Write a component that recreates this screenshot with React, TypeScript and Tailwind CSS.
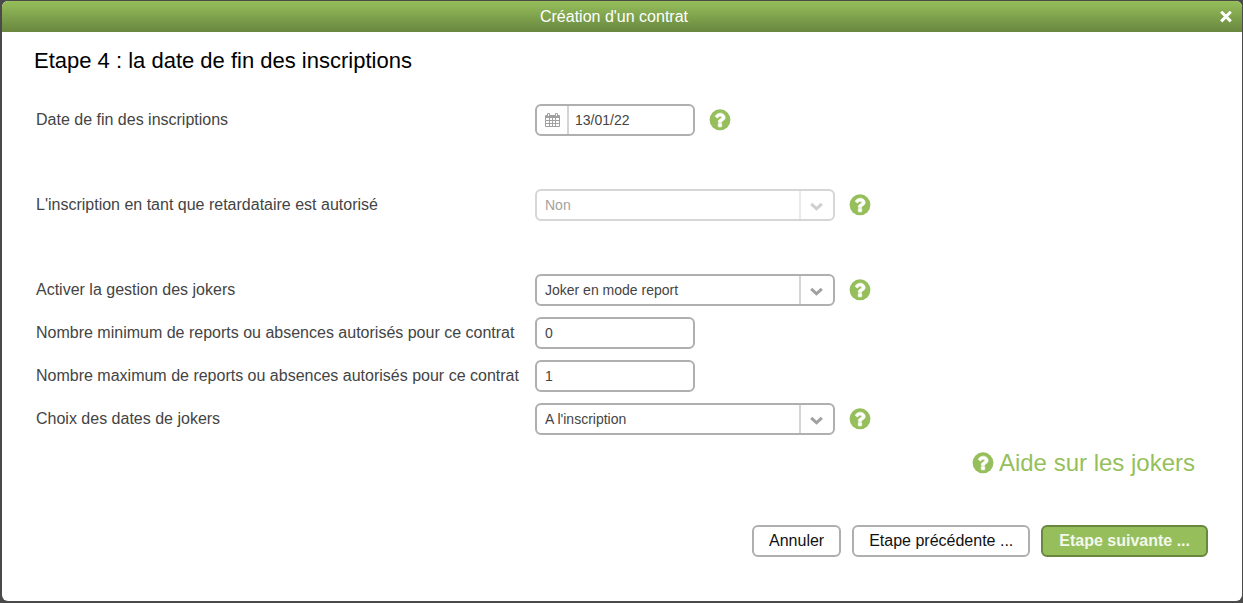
import { useState } from "react";
import type { ReactNode } from "react";
import clsx from "clsx";

const QuestionCircle = () => (
  <svg viewBox="0 0 1792 1792" className="size-6 shrink-0" aria-hidden="true">
    <circle cx="896" cy="880" r="780" className="fill-[#96bf5b]" />
    <path
      className="fill-white stroke-white"
      strokeWidth="50"
      d="M1024 1376v-192q0-14-9-23t-23-9h-192q-14 0-23 9t-9 23v192q0 14 9 23t23 9h192q14 0 23-9t9-23zm256-672q0-88-55.5-163t-138.5-116-170-41q-243 0-371 213-15 24 8 42l132 100q7 6 19 6 16 0 25-12 53-68 86-92 34-24 86-24 48 0 85.5 26t37.5 59q0 38-20 61t-68 45q-63 28-115.5 86.5t-52.5 125.5v36q0 14 9 23t23 9h192q14 0 23-9t9-23q0-19 21.5-49.5t54.5-49.5q32-18 49-28.5t46-35 44.5-48 28-60.5 12.5-81z"
    />
  </svg>
);

const CalendarIcon = () => (
  <svg viewBox="0 0 15 14" className="h-3.5 w-[15px]" aria-hidden="true">
    <path
      className="fill-[#a0a0a0]"
      fillRule="evenodd"
      d="M1 2h13q1 0 1 1v10q0 1-1 1H1q-1 0-1-1V3q0-1 1-1zM1 5v2h3V5zM5 5v2h2V5zM8 5v2h2V5zM11 5v2h3V5zM1 8v2h3V8zM5 8v2h2V8zM8 8v2h2V8zM11 8v2h3V8zM1 11v2h3v-2zM5 11v2h2v-2zM8 11v2h2v-2zM11 11v2h3v-2z"
    />
    <path className="fill-[#a0a0a0]" d="M2 1q0-1 1.5-1T5 1v3H2zM10 1q0-1 1.5-1T13 1v3h-3z" />
    <path className="fill-white" d="M3 1h1v2H3zM11 1h1v2h-1z" />
  </svg>
);

const HelpButton = () => (
  <button type="button" aria-label="Aide" className="ml-[13px] cursor-pointer">
    <QuestionCircle />
  </button>
);

type RowProps = { id: string; label: string; help?: boolean; children: ReactNode };

const Row = ({ id, label, help, children }: RowProps) => (
  <div className="flex items-center">
    <label htmlFor={id} className="w-[499px] shrink-0 leading-5">
      {label}
    </label>
    {children}
    {help && <HelpButton />}
  </div>
);

type SelectProps = { id: string; options: string[]; disabled?: boolean };

const Select = ({ id, options, disabled }: SelectProps) => (
  <div className={clsx("relative w-[300px]", disabled && "opacity-50")}>
    <select
      id={id}
      disabled={disabled}
      className="block h-8 w-full appearance-none rounded-md border-2 border-[#afafaf] bg-white pr-9 pl-2 text-sm text-[#444] opacity-100"
    >
      {options.map((option) => (
        <option key={option}>{option}</option>
      ))}
    </select>
    <span className="pointer-events-none absolute inset-y-0.5 right-0.5 flex w-[34px] items-center justify-center border-l-2 border-[#d4d4d4] pt-0.5 pr-px">
      <svg viewBox="0 0 13 9" className="h-[9px] w-[13px] fill-none stroke-[#a0a0a0] stroke-3" aria-hidden="true">
        <path d="M1.2 1.8 6.5 6.8l5.3-5" />
      </svg>
    </span>
  </div>
);

type NumberFieldProps = { id: string; initial: string };

const NumberField = ({ id, initial }: NumberFieldProps) => {
  const [value, setValue] = useState(initial);

  return (
    <input
      id={id}
      type="text"
      inputMode="numeric"
      value={value}
      onChange={(e) => setValue(e.target.value)}
      className="h-8 w-40 rounded-md border-2 border-[#afafaf] bg-white px-2 text-sm text-[#444]"
    />
  );
};

const App = () => {
  const [date, setDate] = useState("13/01/22");

  return (
    <div className="flex min-h-screen bg-[#4a4a4a] pt-px pr-px pb-0.5 pl-0.5 font-['Liberation_Sans',Arial,sans-serif] text-base text-[#444]">
      <div role="dialog" aria-labelledby="dialog-title" className="flex-1 overflow-hidden rounded-md bg-white">
        <header className="flex h-[31px] items-center bg-linear-to-b from-[#96bf5b] to-[#69873f] pr-2.5 pl-1.5 text-white">
          <h1 id="dialog-title" className="flex-1 text-center">
            Création d'un contrat
          </h1>
          <button type="button" aria-label="Fermer" className="cursor-pointer">
            <svg viewBox="0 0 12 12" className="size-3 fill-none stroke-white stroke-3" aria-hidden="true">
              <path d="m1.2.8 9.6 9.6M10.8.8 1.2 10.4" />
            </svg>
          </button>
        </header>

        <form className="pt-[17px] pr-[34px] pb-11 pl-8" onSubmit={(e) => e.preventDefault()}>
          <h2 className="text-[22px] leading-6 text-black">Etape 4 : la date de fin des inscriptions</h2>

          <div className="mt-[31px] flex flex-col gap-[53px] pl-0.5">
            <Row id="end-date" label="Date de fin des inscriptions" help>
              <div className="flex h-8 w-40 overflow-hidden rounded-md border-2 border-[#afafaf] bg-white">
                <button
                  type="button"
                  aria-label="Choisir une date"
                  className="flex w-8 shrink-0 cursor-pointer items-center justify-end border-r-2 border-[#d4d4d4] pr-[7px]"
                >
                  <CalendarIcon />
                </button>
                <input
                  id="end-date"
                  type="text"
                  value={date}
                  onChange={(e) => setDate(e.target.value)}
                  className="w-full min-w-0 px-1.5 text-sm text-[#444] outline-none"
                />
              </div>
            </Row>

            <Row id="late" label="L'inscription en tant que retardataire est autorisé" help>
              <Select id="late" options={["Non", "Oui"]} disabled />
            </Row>

            <div className="flex flex-col gap-[11px]">
              <Row id="joker-mode" label="Activer la gestion des jokers" help>
                <Select id="joker-mode" options={["Joker en mode report"]} />
              </Row>
              <Row id="joker-min" label="Nombre minimum de reports ou absences autorisés pour ce contrat">
                <NumberField id="joker-min" initial="0" />
              </Row>
              <Row id="joker-max" label="Nombre maximum de reports ou absences autorisés pour ce contrat">
                <NumberField id="joker-max" initial="1" />
              </Row>
              <Row id="joker-dates" label="Choix des dates de jokers" help>
                <Select id="joker-dates" options={["A l'inscription"]} />
              </Row>
            </div>
          </div>

          <div className="mt-3 flex justify-end pr-[13px]">
            <a href="#aide-jokers" className="flex items-center gap-1 text-2xl text-[#96bf5b]">
              <QuestionCircle />
              Aide sur les jokers
            </a>
          </div>

          <div className="mt-[46px] flex justify-end gap-[11px]">
            <button type="button" className="h-8 cursor-pointer rounded-md border-2 border-[#afafaf] px-[15px] text-[#111]">
              Annuler
            </button>
            <button type="button" className="h-8 cursor-pointer rounded-md border-2 border-[#afafaf] px-[15px] text-[#111]">
              Etape précédente ...
            </button>
            <button
              type="submit"
              className="h-8 cursor-pointer rounded-md border-2 border-[#69873f] bg-[#96bf5b] px-4 font-bold text-[#f3f8ec]"
            >
              Etape suivante ...
            </button>
          </div>
        </form>
      </div>
    </div>
  );
};

export default App;
